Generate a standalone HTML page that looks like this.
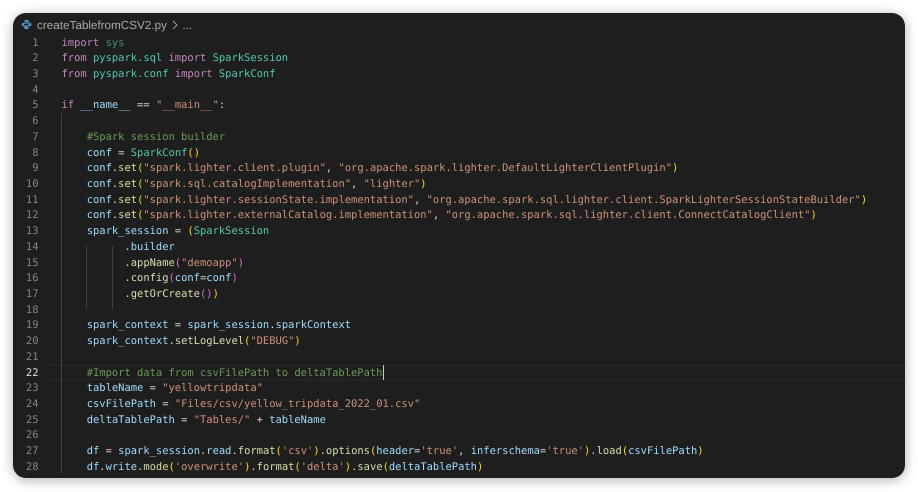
<!DOCTYPE html>
<html><head><meta charset="utf-8">
<style>
html,body{margin:0;padding:0;background:#fff;width:918px;height:492px;overflow:hidden}
#win{position:absolute;left:13px;top:13px;width:892px;height:465px;background:#1e1e1e;border-radius:13px;box-shadow:0 2px 12px rgba(0,0,0,.32);overflow:hidden}
#crumb,#dots{position:absolute;left:24px;top:5px;font:11.7px/16px "Liberation Sans",sans-serif;color:#a9a9a9;white-space:pre;filter:blur(.3px);text-rendering:geometricPrecision}
#dots{left:169.5px}
#nums,#code{position:absolute;top:22.5px;font:10.46px/15.72px "DejaVu Sans Mono",monospace;white-space:pre;filter:blur(.33px);text-rendering:geometricPrecision}
#nums{left:0;width:25.5px;text-align:right;color:#858585}
#code{left:48.5px;color:#d4d4d4}
.g{position:absolute;width:1px;background:#404040}
#hl{position:absolute;left:36px;right:0;top:352px;height:15px;border-top:1px solid #2a2a2a;border-bottom:1px solid #2a2a2a;box-sizing:border-box}
#cur{position:absolute;left:370px;top:351.5px;width:1px;height:15px;background:#c8c8c8}
.k{color:#c586c0}.c{color:#4ec9b0}.v{color:#9cdcfe}.f{color:#dcdcaa}.s{color:#ce9178}.m{color:#6a9955}.y{color:#ffd700}.p{color:#da70d6}.d{color:#3f8f80}.w{color:#e0e0e0}
</style></head><body>
<div id="win">
<div id="hl"></div>
<div class="g" style="left:48px;top:100px;height:360px"></div>
<div class="g" style="left:73px;top:233px;height:63px"></div>
<div class="g" style="left:99px;top:233px;height:63px"></div>
<svg style="position:absolute;left:8px;top:6px" width="11" height="11" viewBox="0 0 11 11"><path d="M5.5.8C3.8.8 3.4 1.4 3.4 2.2v1h2.2v.5H2.2C1.2 3.7.6 4.4.6 5.5s.6 1.9 1.5 1.9h.9V6.2c0-.9.7-1.5 1.5-1.5h2.1c.7 0 1.2-.5 1.2-1.2V2.2C7.8 1.3 7 .8 5.5.8z" fill="#3f8fbf"/><path d="M5.5 10.2c1.7 0 2.1-.6 2.1-1.4v-1H5.4v-.5h3.4c1 0 1.6-.7 1.6-1.8s-.6-1.9-1.5-1.9H8v1.2c0 .9-.7 1.5-1.5 1.5H4.4c-.7 0-1.2.5-1.2 1.2v1.3c0 .9.8 1.4 2.3 1.4z" fill="#4d9cc9"/></svg>
<div id="crumb">createTablefromCSV2.py</div>
<svg style="position:absolute;left:159px;top:7px" width="6" height="10" viewBox="0 0 6 10"><path d="M1 1l4 4-4 4" fill="none" stroke="#a0a0a0" stroke-width="1"/></svg>
<div id="dots">...</div>
<div id="nums">1
2
3
4
5
6
7
8
9
10
11
12
13
14
15
16
17
18
19
20
21
<span style="color:#dedede">22</span>
23
24
25
26
27
28</div>
<div id="code"><span class="k">import</span> <span class="d">sys</span>
<span class="k">from</span> <span class="c">pyspark.sql</span> <span class="k">import</span> <span class="c">SparkSession</span>
<span class="k">from</span> <span class="c">pyspark.conf</span> <span class="k">import</span> <span class="c">SparkConf</span>

<span class="k">if</span> <span class="v">__name__</span> == <span class="s">"__main__"</span>:

    <span class="m">#Spark session builder</span>
    <span class="v">conf</span> = <span class="c">SparkConf</span><span class="y">()</span>
    <span class="v">conf</span>.<span class="f">set</span><span class="y">(</span><span class="s">"spark.lighter.client.plugin"</span>, <span class="s">"org.apache.spark.lighter.DefaultLighterClientPlugin"</span><span class="y">)</span>
    <span class="v">conf</span>.<span class="f">set</span><span class="y">(</span><span class="s">"spark.sql.catalogImplementation"</span>, <span class="s">"lighter"</span><span class="y">)</span>
    <span class="v">conf</span>.<span class="f">set</span><span class="y">(</span><span class="s">"spark.lighter.sessionState.implementation"</span>, <span class="s">"org.apache.spark.sql.lighter.client.SparkLighterSessionStateBuilder"</span><span class="y">)</span>
    <span class="v">conf</span>.<span class="f">set</span><span class="y">(</span><span class="s">"spark.lighter.externalCatalog.implementation"</span>, <span class="s">"org.apache.spark.sql.lighter.client.ConnectCatalogClient"</span><span class="y">)</span>
    <span class="v">spark_session</span> = <span class="y">(</span><span class="c">SparkSession</span>
          .<span class="v">builder</span>
          .<span class="f">appName</span><span class="p">(</span><span class="s">"demoapp"</span><span class="p">)</span>
          .<span class="f">config</span><span class="p">(</span><span class="v">conf</span>=<span class="v">conf</span><span class="p">)</span>
          .<span class="f">getOrCreate</span><span class="p">()</span><span class="y">)</span>

    <span class="v">spark_context</span> = <span class="v">spark_session</span>.<span class="v">sparkContext</span>
    <span class="v">spark_context</span>.<span class="f">setLogLevel</span><span class="y">(</span><span class="s">"DEBUG"</span><span class="y">)</span>

    <span class="m">#Import data from csvFilePath to deltaTablePath</span>
    <span class="v">tableName</span> = <span class="s">"yellowtripdata"</span>
    <span class="v">csvFilePath</span> = <span class="s">"Files/csv/yellow_tripdata_2022_01.csv"</span>
    <span class="v">deltaTablePath</span> = <span class="s">"Tables/"</span> + <span class="v">tableName</span>

    <span class="v">df</span> = <span class="v">spark_session</span>.<span class="v">read</span>.<span class="f">format</span><span class="y">(</span><span class="s">'csv'</span><span class="y">)</span>.<span class="f">options</span><span class="y">(</span><span class="v">header</span>=<span class="s">'true'</span>, <span class="v">inferschema</span>=<span class="s">'true'</span><span class="y">)</span>.<span class="f">load</span><span class="y">(</span><span class="v">csvFilePath</span><span class="y">)</span>
    <span class="v">df</span>.<span class="v">write</span>.<span class="f">mode</span><span class="y">(</span><span class="s">'overwrite'</span><span class="y">)</span>.<span class="f">format</span><span class="y">(</span><span class="s">'delta'</span><span class="y">)</span>.<span class="f">save</span><span class="y">(</span><span class="v">deltaTablePath</span><span class="y">)</span></div>
<div id="cur"></div>
</div>
</body></html>
